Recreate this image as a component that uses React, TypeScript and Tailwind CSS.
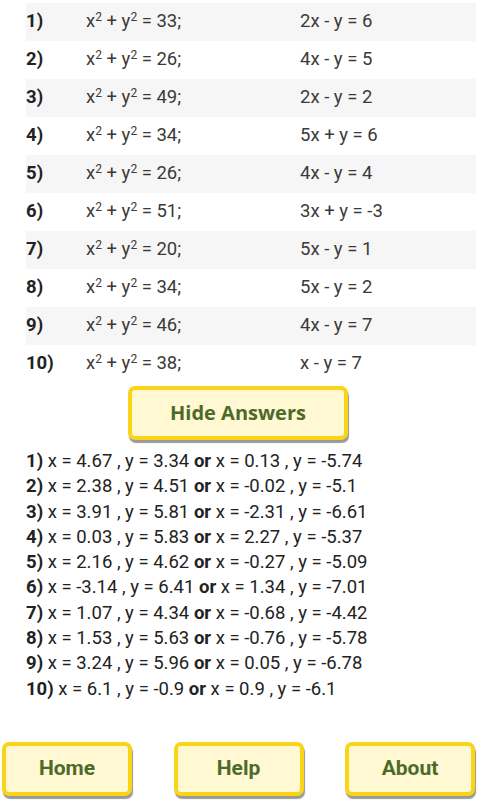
const rows = [
  ["33", "2x - y = 6"],
  ["26", "4x - y = 5"],
  ["49", "2x - y = 2"],
  ["34", "5x + y = 6"],
  ["26", "4x - y = 4"],
  ["51", "3x + y = -3"],
  ["20", "5x - y = 1"],
  ["34", "5x - y = 2"],
  ["46", "4x - y = 7"],
  ["38", "x - y = 7"],
];

const answers = [
  ["x = 4.67 , y = 3.34", "x = 0.13 , y = -5.74"],
  ["x = 2.38 , y = 4.51", "x = -0.02 , y = -5.1"],
  ["x = 3.91 , y = 5.81", "x = -2.31 , y = -6.61"],
  ["x = 0.03 , y = 5.83", "x = 2.27 , y = -5.37"],
  ["x = 2.16 , y = 4.62", "x = -0.27 , y = -5.09"],
  ["x = -3.14 , y = 6.41", "x = 1.34 , y = -7.01"],
  ["x = 1.07 , y = 4.34", "x = -0.68 , y = -4.42"],
  ["x = 1.53 , y = 5.63", "x = -0.76 , y = -5.78"],
  ["x = 3.24 , y = 5.96", "x = 0.05 , y = -6.78"],
  ["x = 6.1 , y = -0.9", "x = 0.9 , y = -6.1"],
];

function YellowButton({ label, className }: { label: string; className: string }) {
  return (
    <button
      className={`flex items-center justify-center rounded-[7px] border-[4px] border-[#fad417] bg-[#fff8d2] font-bold text-[#4e6a2b] shadow-[1px_3px_1px_rgba(0,0,0,0.4)] ${className}`}
    >
      {label}
    </button>
  );
}

export default function App() {
  return (
    <div
      className="flex h-[800px] w-[480px] flex-col overflow-hidden bg-white text-[#2a2a2a]"
      style={{ fontFamily: "Roboto, 'Liberation Sans', sans-serif" }}
    >
      <div className="ml-[26px] mr-[4px] mt-[3px] flex flex-col">
        {rows.map(([c, eq], i) => (
          <div
            key={i}
            className={`flex h-[38px] items-center text-[18.5px] ${i % 2 === 0 ? "bg-[#f6f6f6]" : "bg-white"}`}
          >
            <span className="w-[60px] font-bold text-[#222]">{i + 1})</span>
            <span className="w-[214px] text-[#3a3a3a]">
              x<sup className="text-[12px]">2</sup> + y<sup className="text-[12px]">2</sup> = {c};
            </span>
            <span className="text-[#3a3a3a]">{eq}</span>
          </div>
        ))}
      </div>

      <div className="mt-[3px] flex justify-center pr-[4px]">
        <YellowButton
          label="Hide Answers"
          className="h-[54px] w-[220px] text-[20px] [font-family:'Open_Sans',sans-serif]"
        />
      </div>

      <div className="ml-[26px] mt-[9px] flex flex-col text-[18.5px] leading-[25.3px] text-[#222]">
        {answers.map(([a, b], i) => (
          <div key={i}>
            <span className="font-bold">{i + 1})</span> {a} <span className="font-bold">or</span> {b}
          </div>
        ))}
      </div>

      <div className="mt-auto mb-[4px] flex justify-between pl-[2px] pr-[5px]">
        <YellowButton label="Home" className="h-[54px] w-[130px] text-[21px]" />
        <YellowButton label="Help" className="h-[54px] w-[130px] text-[21px]" />
        <YellowButton label="About" className="h-[54px] w-[130px] text-[21px]" />
      </div>
    </div>
  );
}
